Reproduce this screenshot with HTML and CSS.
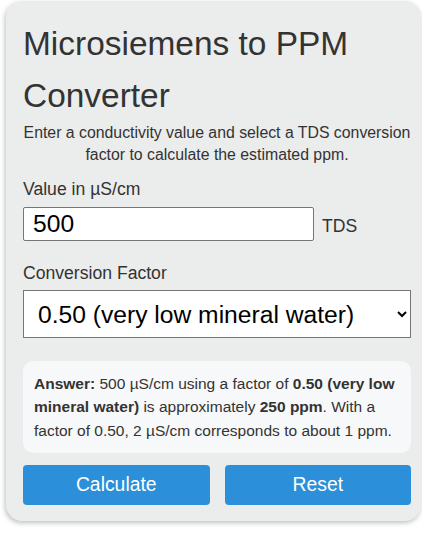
FILE: index.html
```html
<!DOCTYPE html>
<html lang="en">
<head>
    <meta charset="UTF-8">
    <meta name="viewport" content="width=device-width, initial-scale=1.0">
    <title>Microsiemens to PPM Converter</title>
    <link rel="stylesheet" href="styles.css">
</head>
<body>
    <!-- converter card -->
    <div class="card">
        <h1>Microsiemens to PPM Converter</h1>
        <p class="intro">Enter a conductivity value and select a TDS conversion factor to calculate the estimated ppm.</p>

        <label class="field-label" for="us">Value in µS/cm</label>
        <div class="input-row">
            <input type="text" id="us" class="value-input" value="500">
            <span class="unit">TDS</span>
        </div>

        <label class="field-label factor-label" for="factor">Conversion Factor</label>
        <select id="factor" class="factor-select">
            <option>0.50 (very low mineral water)</option>
            <option>0.55</option>
            <option>0.64</option>
            <option>0.70</option>
        </select>

        <div class="answer">
            <b>Answer:</b> 500 µS/cm using a factor of <b>0.50 (very low mineral water)</b> is approximately <b>250 ppm</b>. With a factor of 0.50, 2 µS/cm corresponds to about 1 ppm.
        </div>

        <div class="buttons">
            <button class="btn">Calculate</button>
            <button class="btn">Reset</button>
        </div>
    </div>
</body>
</html>
```

FILE: styles.css
```css
body {
    margin: 0;
    padding: 1px 1px 10px 6px;
    background: #ffffff;
    color: #333;
    font-family: "Liberation Sans", Arial, sans-serif;
    font-size: 17.6px;
}
.card {
    background: #ebecec;
    border-radius: 16px;
    box-shadow: -1px 2px 5px rgba(0, 0, 0, 0.25);
    padding: 17px 10px 16px 17px;
}
h1 {
    font-size: 1.9em;
    font-weight: normal;
    line-height: 52px;
    margin: 0;
}
.intro {
    font-size: 0.9em;
    line-height: 22px;
    text-align: center;
    margin: 0;
}
.field-label {
    display: block;
    line-height: 22px;
    margin-top: 12px;
    margin-bottom: 7px;
}
.factor-label {
    margin-top: 21px;
    margin-bottom: 6px;
}
.input-row {
    display: flex;
    align-items: center;
    gap: 8px;
}
.value-input {
    width: 291px;
    height: 34px;
    box-sizing: border-box;
    border: 1px solid #767676;
    border-radius: 2px;
    padding: 0 9px;
    font-family: inherit;
    font-size: 1.4em;
    color: #000;
    background: #fff;
}
.unit {
    font-size: 1em;
    padding-top: 4px;
}
.factor-select {
    display: block;
    width: 100%;
    height: 48px;
    box-sizing: border-box;
    border: 1px solid #767676;
    border-radius: 0;
    padding: 0 6px 0 10px;
    font-family: inherit;
    font-size: 1.4em;
    color: #000;
    background: #fff;
}
.answer {
    margin-top: 23px;
    background: #f7f8f9;
    border-radius: 10px;
    padding: 11px 8px 11px 11px;
    font-size: 15.5px;
    line-height: 23.3px;
}
.buttons {
    display: flex;
    gap: 15px;
    margin-top: 12px;
}
.btn {
    flex: 1;
    height: 40px;
    border: none;
    border-radius: 4px;
    background: #2b90d9;
    color: #fff;
    font-family: inherit;
    font-size: 1.1em;
    cursor: pointer;
}
.btn:hover {
    background: #1f7fc4;
}
```
